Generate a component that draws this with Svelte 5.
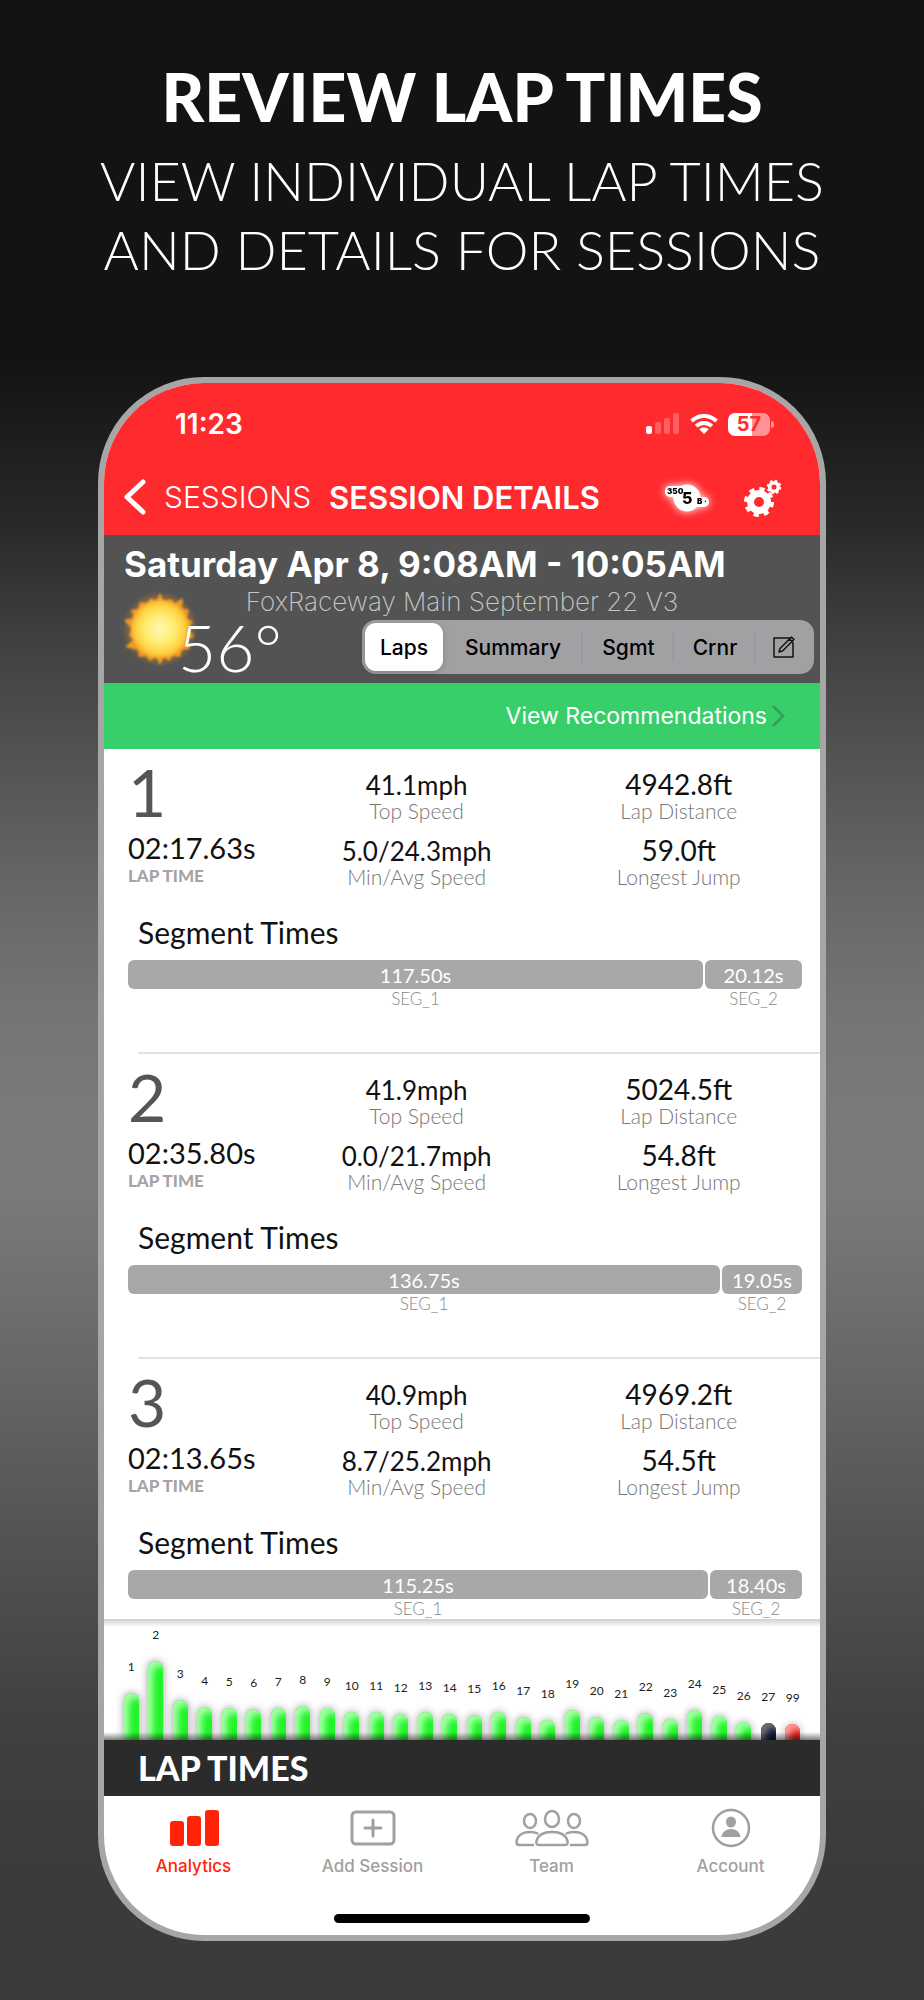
<script lang="ts">
  interface Segment {
    name: string;
    time: string;
    width: number;
  }

  interface Lap {
    number: number;
    time: string;
    topSpeed: string;
    speedRange: string;
    distance: string;
    jump: string;
    segments: Segment[];
  }

  const views = ['Laps', 'Summary', 'Sgmt', 'Crnr'];
  let activeView = $state('Laps');

  const laps: Lap[] = [
    {
      number: 1,
      time: '02:17.63s',
      topSpeed: '41.1mph',
      speedRange: '5.0/24.3mph',
      distance: '4942.8ft',
      jump: '59.0ft',
      segments: [
        { name: 'SEG_1', time: '117.50s', width: 575 },
        { name: 'SEG_2', time: '20.12s', width: 97 }
      ]
    },
    {
      number: 2,
      time: '02:35.80s',
      topSpeed: '41.9mph',
      speedRange: '0.0/21.7mph',
      distance: '5024.5ft',
      jump: '54.8ft',
      segments: [
        { name: 'SEG_1', time: '136.75s', width: 592 },
        { name: 'SEG_2', time: '19.05s', width: 80 }
      ]
    },
    {
      number: 3,
      time: '02:13.65s',
      topSpeed: '40.9mph',
      speedRange: '8.7/25.2mph',
      distance: '4969.2ft',
      jump: '54.5ft',
      segments: [
        { name: 'SEG_1', time: '115.25s', width: 580 },
        { name: 'SEG_2', time: '18.40s', width: 92 }
      ]
    }
  ];

  const barHeights = [
    47, 79, 40, 33, 32, 31, 32, 34, 32, 28, 28, 26, 28, 26, 25, 28, 23, 20, 30, 23, 20, 27, 21, 30,
    24, 18, 17, 16
  ];
  const bars = barHeights.map((height, i) => ({
    lap: i === 27 ? 99 : i + 1,
    height,
    tone: i === 27 ? 'red' : i === 26 ? 'navy' : 'green'
  }));
</script>

<main class="page">
  <header class="promo">
    <h1>REVIEW LAP TIMES</h1>
    <p>VIEW INDIVIDUAL LAP TIMES<br />AND DETAILS FOR SESSIONS</p>
  </header>

  <div class="phone">
    <div class="top">
      <div class="status">
        <span class="clock">11:23</span>
        <div class="status-icons">
          <svg width="34" height="22" viewBox="0 0 34 22" fill="#fff" aria-hidden="true">
            <rect x="0" y="13" width="6" height="8" rx="2" />
            <rect x="9" y="9" width="6" height="12" rx="2" opacity="0.25" />
            <rect x="18" y="5" width="6" height="16" rx="2" opacity="0.25" />
            <rect x="27" y="0" width="6" height="21" rx="2" opacity="0.25" />
          </svg>
          <svg width="28" height="22" viewBox="0 0 28 22" aria-hidden="true">
            <g fill="none" stroke="#fff" stroke-width="4">
              <path d="M1.6 8.2C8.4 1.3 19.6 1.3 26.4 8.2" />
              <path d="M6.2 13.2C10.6 8.8 17.4 8.8 21.8 13.2" />
            </g>
            <path d="M14 21L9.2 16.2C12 13.9 16 13.9 18.8 16.2Z" fill="#fff" />
          </svg>
          <div class="battery">57</div>
        </div>
      </div>
      <nav class="titlebar" aria-label="Session">
        <a class="back" href="#sessions">
          <svg width="22" height="36" viewBox="0 0 22 36" aria-hidden="true">
            <path d="M19 3L3 18L19 33" />
          </svg>
          SESSIONS
        </a>
        <h2>SESSION DETAILS</h2>
        <div class="actions">
          <button class="bike" aria-label="Bike 350">
            <svg width="56" height="40" viewBox="0 0 56 40" aria-hidden="true">
              <g fill="#fff">
                <rect x="6" y="9" width="22" height="11" rx="5" />
                <rect x="30" y="20" width="20" height="10" rx="5" />
                <circle cx="28" cy="21" r="13.5" />
              </g>
              <text x="8" y="17" class="bike-small">350</text>
              <text x="23" y="27" class="bike-number">5</text>
              <text x="38" y="27" class="bike-small">B ·</text>
            </svg>
          </button>
          <button aria-label="Settings">
            <svg width="40" height="40" viewBox="0 0 40 40" aria-hidden="true">
              <g fill="none" stroke="#fff">
                <circle cx="17" cy="25" r="8.5" stroke-width="7" />
                <circle cx="17" cy="25" r="13" stroke-width="4" stroke-dasharray="5.2 5.01" />
                <circle cx="32" cy="10" r="4.3" stroke-width="3.5" />
                <circle cx="32" cy="10" r="6.3" stroke-width="2" stroke-dasharray="2.5 2.448" />
              </g>
            </svg>
          </button>
        </div>
      </nav>
    </div>

    <section class="session">
      <h3>Saturday Apr 8, 9:08AM - 10:05AM</h3>
      <p class="track">FoxRaceway Main September 22 V3</p>
      <div class="session-row">
        <svg class="sun" width="76" height="76" viewBox="0 0 76 76" aria-hidden="true">
          <defs>
            <radialGradient id="sun-disc">
              <stop offset="0" stop-color="#fffab8" />
              <stop offset="0.5" stop-color="#ffec70" />
              <stop offset="0.8" stop-color="#ffd548" />
              <stop offset="1" stop-color="#fbb02c" />
            </radialGradient>
            <radialGradient id="sun-glow">
              <stop offset="0.6" stop-color="#f59a1c" stop-opacity="0.6" />
              <stop offset="1" stop-color="#f59a1c" stop-opacity="0" />
            </radialGradient>
          </defs>
          <circle cx="38" cy="38" r="38" fill="url(#sun-glow)" />
          <g class="soft">
            <path
              d="M38 2L42 10L49 8L53 12L61 7L60 17L67 19L65 27L71 31L66 38L72 45L65 50L68 58L60 59L58 66L51 65L47 70L42 66L38 74L34 66L28 70L24 65L17 66L16 59L3 56L11 49L7 44L10 38L2 29L12 27L9 19L16 18L18 11L25 12L29 7L34 10Z"
              fill="#f09a25"
            />
            <circle cx="38" cy="38" r="29" fill="url(#sun-disc)" />
          </g>
        </svg>
        <span class="temperature">56°</span>
        <div class="segmented">
          {#each views as view (view)}
            <button
              class:active={activeView === view}
              aria-pressed={activeView === view}
              onclick={() => (activeView = view)}
            >
              {view}
            </button>
          {/each}
          <button aria-label="Edit">
            <svg width="22" height="22" viewBox="0 0 22 22" aria-hidden="true">
              <path
                d="M17 2H1V21H20V6M18.5 1L21 3.5L9.500 15L6 16L7 12.500ZM16.500 3L19 5.500"
                fill="none"
                stroke="#111"
                stroke-width="1.500"
                stroke-linejoin="round"
              />
            </svg>
          </button>
        </div>
      </div>
    </section>

    <a class="recommendations" href="#recommendations">
      View Recommendations
      <svg width="14" height="24" viewBox="0 0 14 24" aria-hidden="true">
        <path d="M2 2L12 12L2 22" fill="none" stroke="#38a05c" stroke-width="3" />
      </svg>
    </a>

    <div class="laps">
      {#each laps as lap (lap.number)}
        <article class="lap">
          <div class="stats">
            <div class="lap-main">
              <strong>{lap.number}</strong>
              <span class="lap-time">{lap.time}</span>
              <span class="lap-caption">LAP TIME</span>
            </div>
            <dl class="speed">
              <dd>{lap.topSpeed}</dd>
              <dt>Top Speed</dt>
              <dd>{lap.speedRange}</dd>
              <dt>Min/Avg Speed</dt>
            </dl>
            <dl class="distance">
              <dd>{lap.distance}</dd>
              <dt>Lap Distance</dt>
              <dd>{lap.jump}</dd>
              <dt>Longest Jump</dt>
            </dl>
          </div>
          <h4>Segment Times</h4>
          <div class="segments">
            {#each lap.segments as segment (segment.name)}
              <div class="segment" style="flex-grow: {segment.width}">
                <div class="segment-bar">{segment.time}</div>
                <div class="segment-name">{segment.name}</div>
              </div>
            {/each}
          </div>
        </article>
      {/each}
    </div>

    <div class="chart">
      {#each bars as bar (bar.lap)}
        <div class="column">
          <span>{bar.lap}</span>
          <div class="bar {bar.tone}" style="height: {bar.height}px"></div>
        </div>
      {/each}
    </div>
    <h3 class="chart-title">LAP TIMES</h3>

    <nav class="tabs" aria-label="Main">
      <a class="current" href="#analytics" aria-current="page">
        <svg width="50" height="40" viewBox="0 0 50 40" fill="currentColor" aria-hidden="true">
          <rect x="1" y="13" width="14" height="25" rx="3" />
          <rect x="18" y="8" width="14" height="30" rx="3" />
          <rect x="36" y="2" width="14" height="36" rx="3" />
        </svg>
        Analytics
      </a>
      <a href="#add">
        <svg width="46" height="40" viewBox="0 0 46 40" aria-hidden="true">
          <g fill="none" stroke="currentColor" stroke-width="3" stroke-linecap="round">
            <rect x="2" y="4" width="42" height="32" rx="4" />
            <path d="M15 20H31M23 12V28" />
          </g>
        </svg>
        Add Session
      </a>
      <a href="#team">
        <svg width="74" height="40" viewBox="0 0 74 40" aria-hidden="true">
          <g fill="none" stroke="currentColor" stroke-width="2.500" stroke-linecap="round">
            <ellipse cx="37" cy="11" rx="7" ry="8" />
            <ellipse cx="15" cy="13" rx="6" ry="7" />
            <ellipse cx="59" cy="13" rx="6" ry="7" />
            <path
              d="M24 37C21.500 37 21 35 21.500 33C23 27 29 24 37 24S51 27 52.500 33C53 35 52.500 37 50 37Z"
            />
            <path d="M18 37H4C2 37 1.500 36 1.500 34C2 28 7 24 15 24C18 24 20.500 24.500 22.500 25.500" />
            <path d="M56 37H70C72 37 72.500 36 72.500 34C72 28 67 24 59 24C56 24 53.500 24.500 51.500 25.500" />
          </g>
        </svg>
        Team
      </a>
      <a href="#account">
        <svg width="40" height="40" viewBox="0 0 40 40" aria-hidden="true">
          <circle cx="20" cy="20" r="18" fill="none" stroke="currentColor" stroke-width="2.500" />
          <ellipse cx="20" cy="14" rx="5" ry="5.500" fill="currentColor" />
          <path d="M10.500 29C11 24 15 21 20 21S29 24 29.500 29Z" fill="currentColor" />
        </svg>
        Account
      </a>
    </nav>
    <div class="home-indicator"></div>
  </div>
</main>

<style>
  :global(body) {
    margin: 0;
    background: #3b3b3b;
  }

  .page {
    padding: 58px 98px;
    display: flex;
    flex-direction: column;
    background: linear-gradient(
      #131313 18%,
      #282828 26%,
      #404040 32%,
      #535353 38%,
      #686868 45%,
      #757575 51%,
      #7a7a7a 56%,
      #797979 60%,
      #6a6a6a 67%,
      #555 76%,
      #404040 86%,
      #3b3b3b 93%
    );
    font-family: Inter, 'Liberation Sans', sans-serif;
  }

  h1,
  h2,
  h3,
  h4,
  p,
  dl,
  dd {
    margin: 0;
  }

  a {
    text-decoration: none;
  }

  button {
    border: 0;
    padding: 0;
    background: none;
    font-family: inherit;
    cursor: pointer;
  }

  svg {
    display: block;
    flex: none;
  }

  .promo {
    height: 319px;
    color: #fff;
    font-family: Lato, 'Open Sans', sans-serif;
    text-align: center;
    white-space: nowrap;
    display: flex;
    flex-direction: column;
    align-items: center;
  }

  h1 {
    font-size: 66px;
    line-height: 78px;
    font-weight: 900;
  }

  .promo p {
    margin-top: 10px;
    font-size: 54px;
    line-height: 69px;
    font-weight: 300;
  }

  .phone {
    border: 6px solid #a6a6a6;
    border-radius: 106px;
    overflow: hidden;
    background: #fff;
  }

  .top {
    background: #ff2a2e;
    color: #fff;
    padding: 24px 38px 0 20px;
    height: 152px;
    box-sizing: border-box;
  }

  .status {
    display: flex;
    justify-content: space-between;
    align-items: center;
    height: 34px;
    padding: 0 12px 0 51px;
  }

  .clock {
    font-size: 28px;
    font-weight: 600;
  }

  .status-icons {
    display: flex;
    align-items: center;
    gap: 10px;
  }

  .battery {
    position: relative;
    width: 42px;
    height: 23px;
    border-radius: 7px;
    background: linear-gradient(90deg, #fff 57%, #ff9496 57%);
    color: #ff2a2e;
    font-size: 20px;
    line-height: 23px;
    font-weight: 700;
    text-align: center;
  }

  .battery::after {
    content: '';
    position: absolute;
    left: 43px;
    top: 8px;
    width: 3px;
    height: 7px;
    border-radius: 0 3px 3px 0;
    background: #ff9496;
  }

  .titlebar {
    display: flex;
    align-items: center;
    height: 60px;
    margin-top: 26px;
    white-space: nowrap;
  }

  .back {
    display: flex;
    align-items: center;
    gap: 18px;
    color: #fff;
    font-size: 30px;
    font-weight: 300;
  }

  .back path {
    fill: none;
    stroke: #fff;
    stroke-width: 5;
    stroke-linecap: round;
    stroke-linejoin: round;
  }

  h2 {
    margin-left: 18px;
    font-size: 31px;
    font-weight: 600;
  }

  .actions {
    display: flex;
    gap: 27px;
    margin-left: auto;
  }

  .bike svg {
    filter: drop-shadow(0 0 4px #fff);
  }

  .bike-small {
    font-size: 8px;
    font-weight: 900;
  }

  .bike-number {
    font-size: 16px;
    font-weight: 800;
  }

  .session {
    background: #535353;
    color: #fff;
    height: 148px;
    padding-top: 8px;
    box-sizing: border-box;
    white-space: nowrap;
  }

  .session h3 {
    padding-left: 20px;
    font-size: 35px;
    line-height: 42px;
    font-weight: 700;
  }

  .track {
    color: #c8c8c8;
    font-size: 26px;
    line-height: 34px;
    font-weight: 200;
    text-align: center;
  }

  .session-row {
    display: flex;
    align-items: center;
    height: 56px;
    padding: 0 6px 0 18px;
  }

  .sun {
    margin: -36px -20px 0 0;
  }

  .soft {
    filter: blur(1px);
  }

  .temperature {
    position: relative;
    font-family: Lato, sans-serif;
    font-size: 66px;
    line-height: 66px;
    font-weight: 300;
  }

  .segmented {
    margin-left: auto;
    box-sizing: border-box;
    width: 452px;
    height: 54px;
    padding: 3px;
    border-radius: 14px;
    background: #a1a1a4;
    display: grid;
    grid-template-columns: 78fr 140fr 91fr 82fr 55fr;
  }

  .segmented button {
    display: flex;
    justify-content: center;
    align-items: center;
    color: #000;
    font-size: 21px;
    font-weight: 500;
    background: linear-gradient(#98989f, #98989f) right center / 2px 30px no-repeat;
  }

  .segmented button:last-child {
    background: none;
  }

  .segmented .active {
    border-radius: 11px;
    background: #fff;
    box-shadow: 0 2px 6px rgba(0, 0, 0, 0.2);
  }

  .recommendations {
    display: flex;
    justify-content: flex-end;
    align-items: center;
    gap: 4px;
    height: 66px;
    padding-right: 35px;
    background: #38cf6b;
    color: #fff;
    font-size: 23px;
  }

  .laps {
    height: 870px;
    overflow: hidden;
    font-family: Lato, 'Open Sans', sans-serif;
    color: #111;
  }

  .lap {
    position: relative;
    height: 305px;
    padding: 10px 10px 0 24px;
    box-sizing: border-box;
  }

  .lap::after {
    content: '';
    position: absolute;
    left: 34px;
    right: 0;
    bottom: 0;
    height: 2px;
    background: #e2e2e2;
  }

  .stats {
    display: grid;
    grid-template-columns: 158fr 262fr 263fr;
    height: 155px;
  }

  .lap-main {
    display: flex;
    flex-direction: column;
    white-space: nowrap;
  }

  .lap-main strong {
    color: #555;
    font-size: 66px;
    line-height: 66px;
    font-weight: 400;
  }

  .lap-time {
    margin-top: 6px;
    font-size: 29px;
    line-height: 34px;
  }

  .lap-caption {
    color: #a5a5a5;
    font-size: 17px;
    line-height: 22px;
    font-weight: 900;
  }

  dl {
    text-align: center;
  }

  dt {
    color: #777;
    font-size: 21px;
    font-weight: 300;
    line-height: 22px;
    margin-bottom: 14px;
  }

  .speed {
    padding-top: 11px;
  }

  .speed dd {
    font-size: 26px;
    line-height: 30px;
  }

  .distance {
    padding-top: 9px;
  }

  .distance dd {
    font-size: 28px;
    line-height: 32px;
  }

  .distance dt {
    margin-bottom: 12px;
  }

  h4 {
    margin-left: 10px;
    font-size: 30px;
    line-height: 36px;
    font-weight: 400;
  }

  .segments {
    display: flex;
    gap: 2px;
    margin: 10px 8px 0 0;
  }

  .segment {
    flex-basis: 0;
    text-align: center;
  }

  .segment-bar {
    height: 29px;
    border-radius: 6px;
    background: #a8a8a8;
    color: #fff;
    font-size: 20px;
    line-height: 31px;
  }

  .segment-name {
    color: #888;
    font-size: 17px;
    line-height: 20px;
    font-weight: 300;
  }

  .chart {
    position: relative;
    display: grid;
    grid-template-columns: repeat(28, 1fr);
    align-items: end;
    height: 121px;
    padding: 0 15px;
    overflow: hidden;
    background: linear-gradient(#cfcfcf, #fff 8px);
    font-family: Lato, sans-serif;
  }

  .chart::after {
    content: '';
    position: absolute;
    left: 0;
    right: 0;
    bottom: 0;
    height: 8px;
    background: linear-gradient(transparent, rgba(0, 0, 0, 0.5));
  }

  .column {
    display: flex;
    flex-direction: column;
    align-items: center;
    gap: 18px;
    color: #222;
    font-size: 12px;
    line-height: 16px;
  }

  .bar {
    width: 15px;
    border-radius: 8px 8px 0 0;
  }

  .green {
    background: #1ff526;
    box-shadow:
      0 0 8px rgba(0, 0, 0, 0.4),
      inset 5px 5px 6px #a4ffa6;
  }

  .navy {
    background: #0c1838;
    box-shadow: inset 5px 5px 6px #6c6f78;
  }

  .red {
    background: #e81c1c;
    box-shadow:
      0 0 8px rgba(0, 0, 0, 0.3),
      inset 5px 5px 6px #ff9a9a;
  }

  .chart-title {
    height: 56px;
    padding-left: 34px;
    background: #2b2b2b;
    color: #fff;
    font-family: Lato, sans-serif;
    font-size: 34px;
    line-height: 56px;
    font-weight: 900;
  }

  .tabs {
    display: grid;
    grid-template-columns: repeat(4, 1fr);
    padding-top: 12px;
  }

  .tabs a {
    display: flex;
    flex-direction: column;
    align-items: center;
    gap: 6px;
    color: #a0a0a0;
    font-size: 17px;
    line-height: 24px;
    font-weight: 500;
  }

  .tabs .current {
    color: #ff2408;
  }

  .home-indicator {
    width: 256px;
    height: 9px;
    margin: 36px auto 12px;
    border-radius: 5px;
    background: #000;
  }
</style>
